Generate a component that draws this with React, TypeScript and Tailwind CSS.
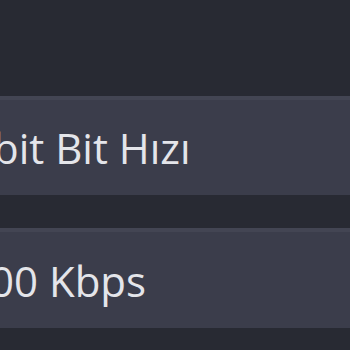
export default function App() {
  return (
    <div className="w-[350px] h-[350px] overflow-hidden bg-[#282a33] flex flex-col" style={{ fontFamily: '"Open Sans", "Noto Sans", sans-serif' }}>
      <div className="h-[96px] shrink-0" />
      <div className="h-[99px] shrink-0 bg-[#3b3d4b] border-t-[4px] border-[#434553] flex items-start">
        <span className="mt-[23px] -ml-[7px] whitespace-nowrap text-[42px] leading-[50px] text-[#e4e5ea]">bit Bit Hızı</span>
      </div>
      <div className="h-[33px] shrink-0" />
      <div className="h-[100px] shrink-0 bg-[#3b3d4b] border-t-[4px] border-[#434553] flex items-start">
        <span className="mt-[24px] -ml-[10px] whitespace-nowrap text-[42px] leading-[50px] text-[#e4e5ea]">00 Kbps</span>
      </div>
    </div>
  );
}
